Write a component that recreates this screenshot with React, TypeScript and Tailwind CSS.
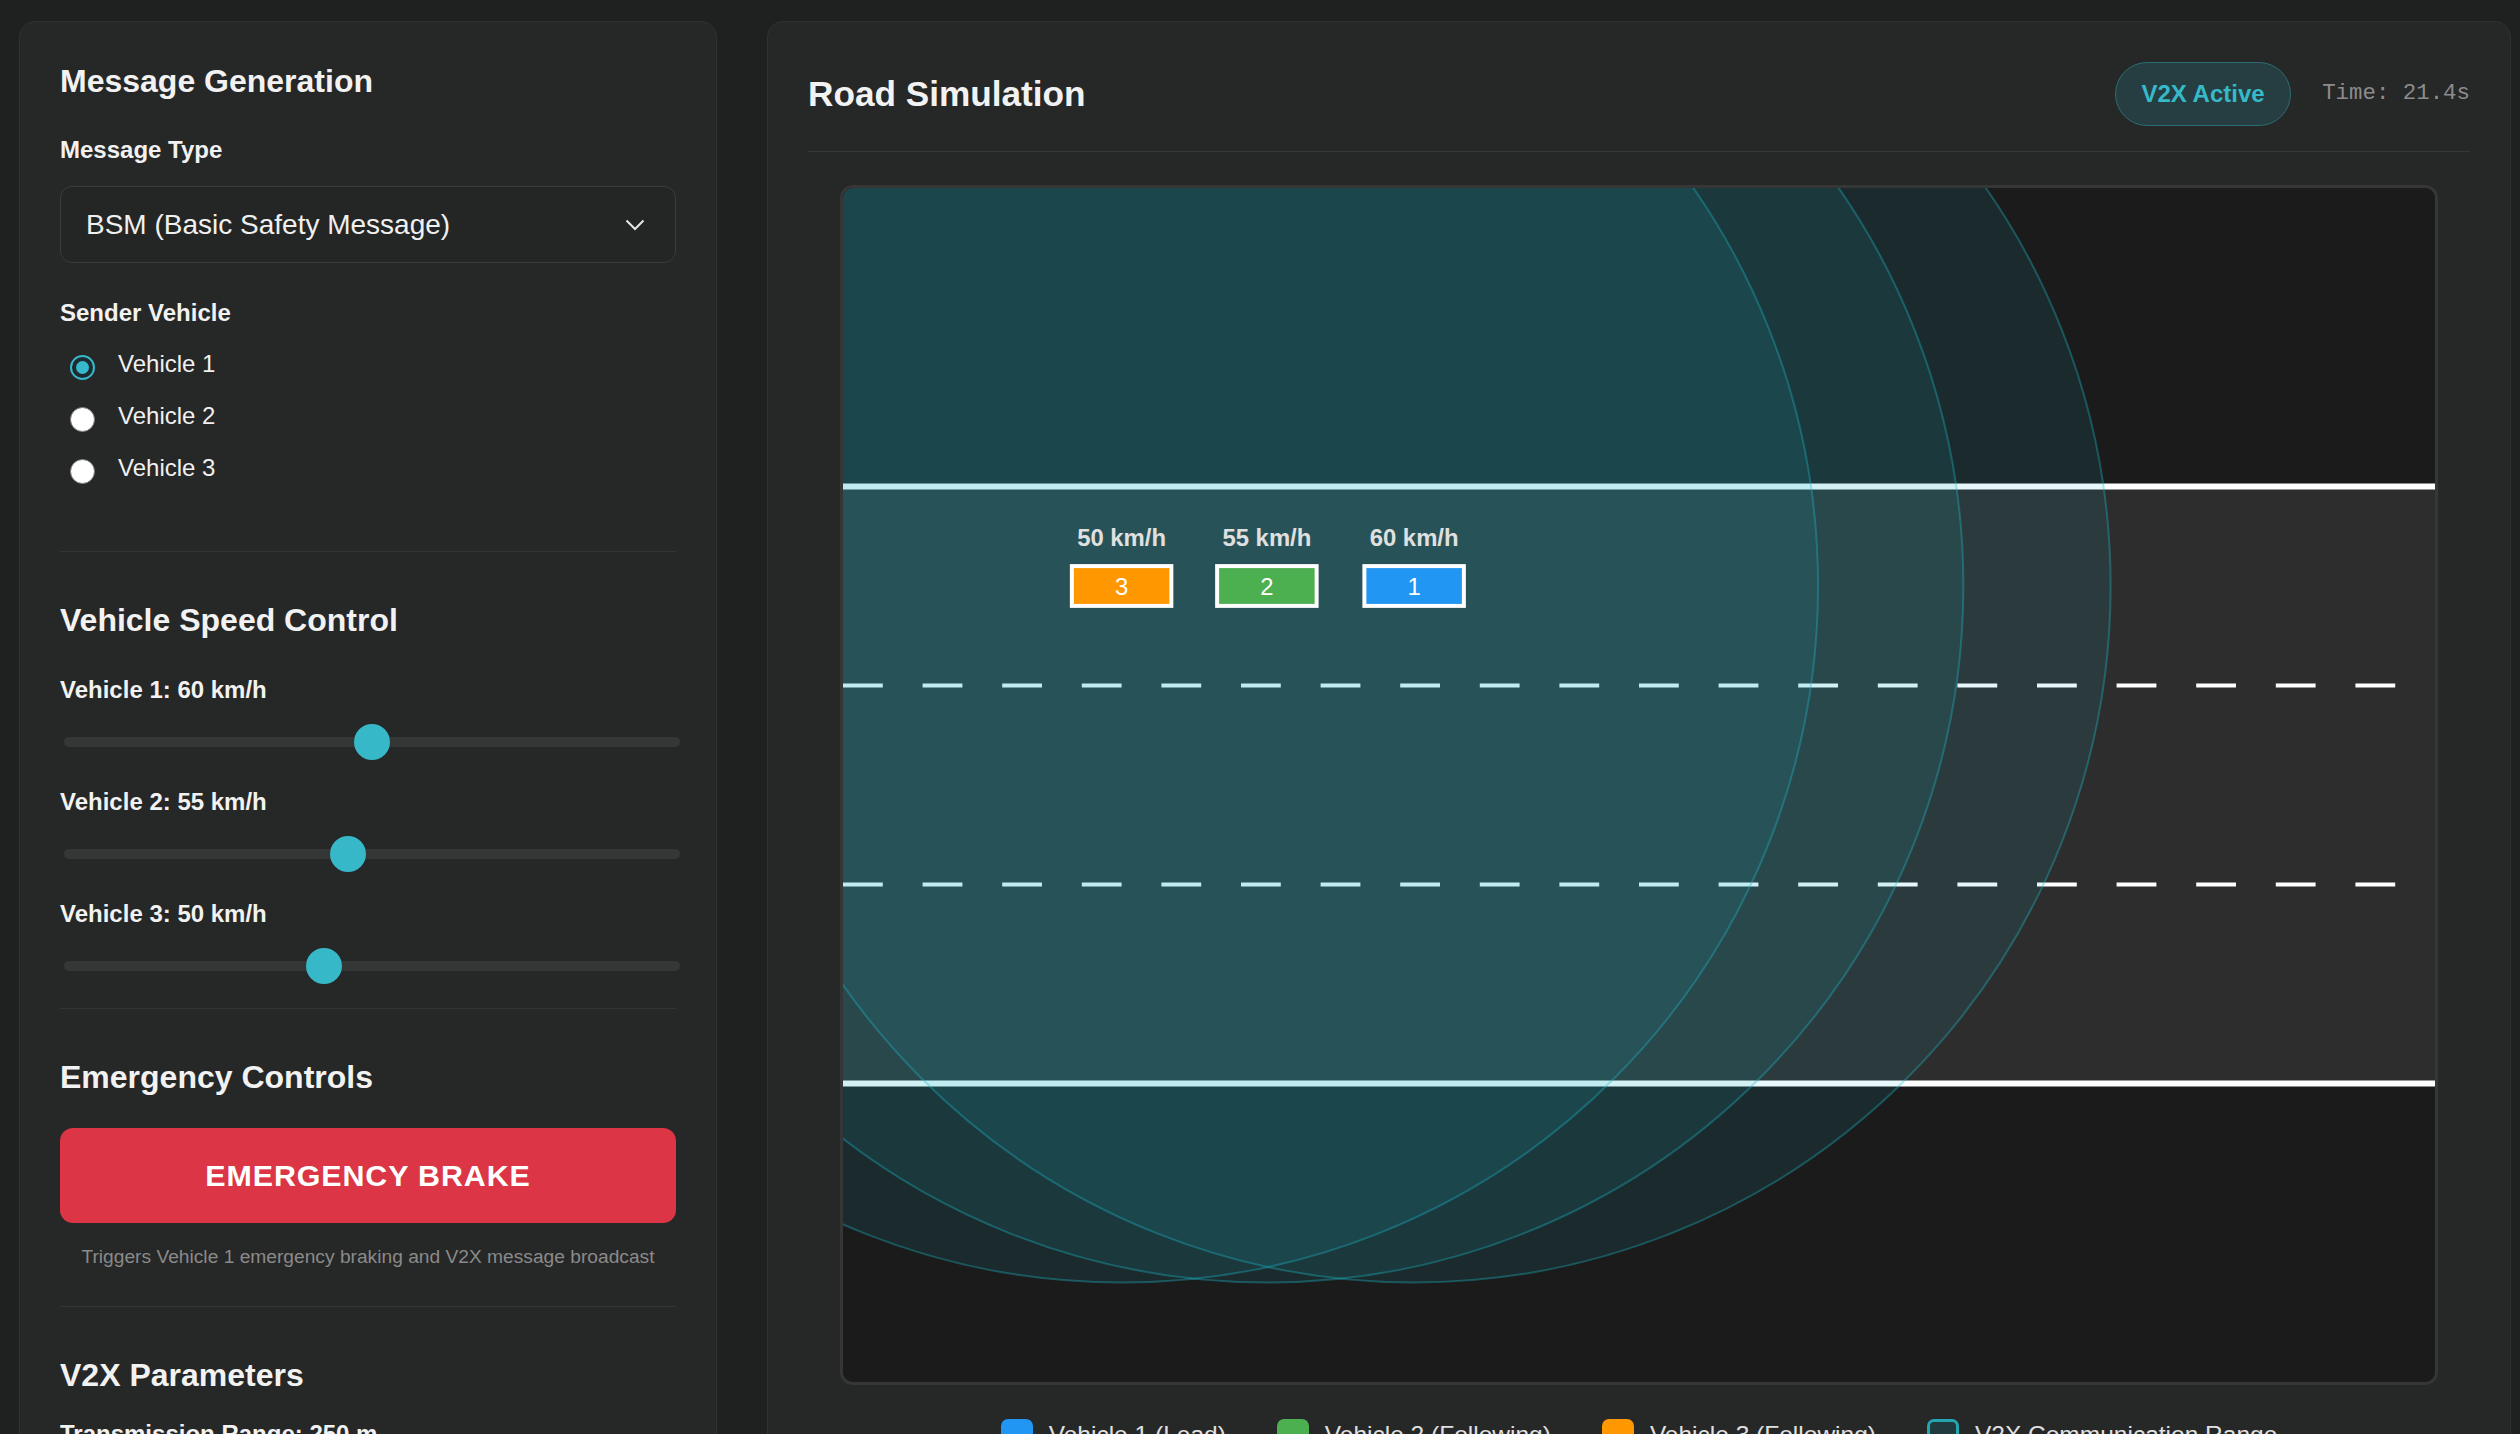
import React from "react";

type Car = { id: number; x: number; speed: number; color: string };

const cars: Car[] = [
  { id: 3, x: 140, speed: 50, color: "#ff9800" },
  { id: 2, x: 213, speed: 55, color: "#4caf50" },
  { id: 1, x: 287, speed: 60, color: "#2196f3" },
];

const speeds = [
  { label: "Vehicle 1: 60 km/h", value: 60 },
  { label: "Vehicle 2: 55 km/h", value: 55 },
  { label: "Vehicle 3: 50 km/h", value: 50 },
];

export default function App() {
  return (
    <div className="flex h-screen gap-[50px] overflow-hidden bg-[#1f2020] pl-[19px] pt-[21px] font-['Liberation_Sans',Arial,sans-serif] text-[#f2f2f2]">
      <ControlPanel />
      <SimulationPanel />
    </div>
  );
}

function ControlPanel() {
  return (
    <aside className="w-[698px] shrink-0 self-start rounded-[16px] border border-[#303131] bg-[#262727] p-[40px]">
      <h2 className="mb-[32px] text-[32px] font-bold leading-[38.4px]">Message Generation</h2>

      <p className="mb-[18px] text-[24px] font-bold leading-[36px]">Message Type</p>
      <div className="mb-[32px] flex h-[77px] items-center justify-between rounded-[12px] border border-[#3b3c3c] bg-[#242525] pl-[25px] pr-[30px] text-[28px] text-[#f0f0f0]">
        <span>BSM (Basic Safety Message)</span>
        <svg width="20" height="12" viewBox="0 0 20 12">
          <path d="M1.5 1.5l8.5 8.5 8.5-8.5" fill="none" stroke="#e6e6e6" strokeWidth="2" />
        </svg>
      </div>

      <p className="mb-[7px] text-[24px] font-bold leading-[36px]">Sender Vehicle</p>
      <div className="flex flex-col">
        {["Vehicle 1", "Vehicle 2", "Vehicle 3"].map((v, i) => (
          <div key={v} className="flex h-[52px] items-center">
            {i === 0 ? (
              <span className="ml-[10px] mt-[6px] flex h-[25px] w-[25px] items-center justify-center rounded-full border-2 border-[#36b9cc] bg-[#1d2b2e]">
                <span className="h-[13px] w-[13px] rounded-full bg-[#36b9cc]" />
              </span>
            ) : (
              <span className="ml-[10px] mt-[6px] h-[25px] w-[25px] rounded-full border border-[#7a7a7a] bg-white" />
            )}
            <span className="ml-[23px] text-[24px] leading-[36px] text-[#f0f0f0]">{v}</span>
          </div>
        ))}
      </div>

      <div className="mb-[49px] mt-[57px] h-px bg-[#333434]" />

      <h2 className="mb-[32px] text-[32px] font-bold leading-[38.4px]">Vehicle Speed Control</h2>
      {speeds.map((s) => (
        <div key={s.label} className="mb-[24px]">
          <p className="mb-[16px] text-[24px] font-bold leading-[36px]">{s.label}</p>
          <Slider value={s.value} />
        </div>
      ))}

      <div className="mb-[49px] h-px bg-[#333434]" />

      <h2 className="mb-[32px] text-[32px] font-bold leading-[38.4px]">Emergency Controls</h2>
      <button className="h-[95px] w-full rounded-[13px] bg-[#dc3545] text-[30.4px] font-bold tracking-[0.9px] text-white">
        EMERGENCY BRAKE
      </button>
      <p className="mt-[20px] text-center text-[19.2px] leading-[28.8px] text-[#8a8a8a]">
        Triggers Vehicle 1 emergency braking and V2X message broadcast
      </p>

      <div className="mb-[49px] mt-[34px] h-px bg-[#333434]" />

      <h2 className="mb-[22px] text-[32px] font-bold leading-[38.4px]">V2X Parameters</h2>
      <p className="text-[24px] font-bold leading-[36px]">Transmission Range: 250 m</p>
    </aside>
  );
}

function Slider({ value }: { value: number }) {
  const left = (value / 120) * 580;
  return (
    <div className="relative ml-[4px] flex h-[36px] w-[616px] items-center">
      <div className="h-[10px] w-full rounded-full bg-[#353636]" />
      <div
        className="absolute top-0 h-[36px] w-[36px] rounded-full bg-[#36b8c8]"
        style={{ left }}
      />
    </div>
  );
}

function SimulationPanel() {
  return (
    <main className="w-[1744px] shrink-0 self-start rounded-[16px] border border-[#303131] bg-[#262727] p-[40px]">
      <div className="flex items-center justify-between border-b border-[#363737] pb-[25.6px]">
        <h1 className="text-[35.2px] font-bold leading-[42px]">Road Simulation</h1>
        <div className="flex items-center gap-[31px]">
          <span className="flex h-[63.6px] items-center rounded-full border border-[#2d6c72] bg-[#263e41] px-[25.6px] text-[24px] font-bold text-[#36b9c9]">
            V2X Active
          </span>
          <span className="font-['Liberation_Mono',monospace] text-[22.4px] text-[#8c8c8c]">Time: 21.4s</span>
        </div>
      </div>

      <div className="mx-auto mt-[33px] w-fit overflow-hidden rounded-[13px] border-[3px] border-[#363636]">
        <RoadCanvas />
      </div>

      <div className="mt-[32px] flex justify-center gap-[51px]">
        <LegendItem swatch="bg-[#2196f3]" label="Vehicle 1 (Lead)" />
        <LegendItem swatch="bg-[#4caf50]" label="Vehicle 2 (Following)" />
        <LegendItem swatch="bg-[#ff9800]" label="Vehicle 3 (Following)" />
        <LegendItem swatch="border-[3px] border-[#24a6b2] bg-[#1f3b3e]" label="V2X Communication Range" />
      </div>
    </main>
  );
}

function LegendItem({ swatch, label }: { swatch: string; label: string }) {
  return (
    <div className="flex items-center gap-[16px]">
      <span className={`h-[32px] w-[32px] rounded-[7px] ${swatch}`} />
      <span className="text-[24.5px] leading-[36px] text-[#e0e0e0]">{label}</span>
    </div>
  );
}

function RoadCanvas() {
  const font = "'Liberation Sans', Arial, sans-serif";
  return (
    <svg viewBox="0 0 800 600" width={1592} height={1194} className="block">
      <rect width="800" height="600" fill="#1b1b1b" />
      <rect y="150" width="800" height="300" fill="#2d2d2d" />
      <line x1="0" y1="150" x2="800" y2="150" stroke="#ffffff" strokeWidth="3" />
      <line x1="0" y1="450" x2="800" y2="450" stroke="#ffffff" strokeWidth="3" />
      <line x1="0" y1="250" x2="800" y2="250" stroke="#ffffff" strokeWidth="2" strokeDasharray="20 20" />
      <line x1="0" y1="350" x2="800" y2="350" stroke="#ffffff" strokeWidth="2" strokeDasharray="20 20" />

      {cars.map((c) => (
        <circle
          key={`r${c.id}`}
          cx={c.x}
          cy="200"
          r="350"
          fill="rgba(30,190,205,0.1)"
          stroke="rgba(30,190,205,0.35)"
          strokeWidth="1"
        />
      ))}

      {cars.map((c) => (
        <g key={c.id}>
          <rect x={c.x - 25} y="190" width="50" height="20" fill={c.color} stroke="#ffffff" strokeWidth="2" />
          <text
            x={c.x}
            y="204.3"
            textAnchor="middle"
            fill="#ffffff"
            fontFamily={font}
            fontSize="12"
          >
            {c.id}
          </text>
          <text
            x={c.x}
            y="180"
            textAnchor="middle"
            fill="#e0e0e0"
            fontFamily={font}
            fontWeight="bold"
            fontSize="12"
          >
            {c.speed} km/h
          </text>
        </g>
      ))}
    </svg>
  );
}
